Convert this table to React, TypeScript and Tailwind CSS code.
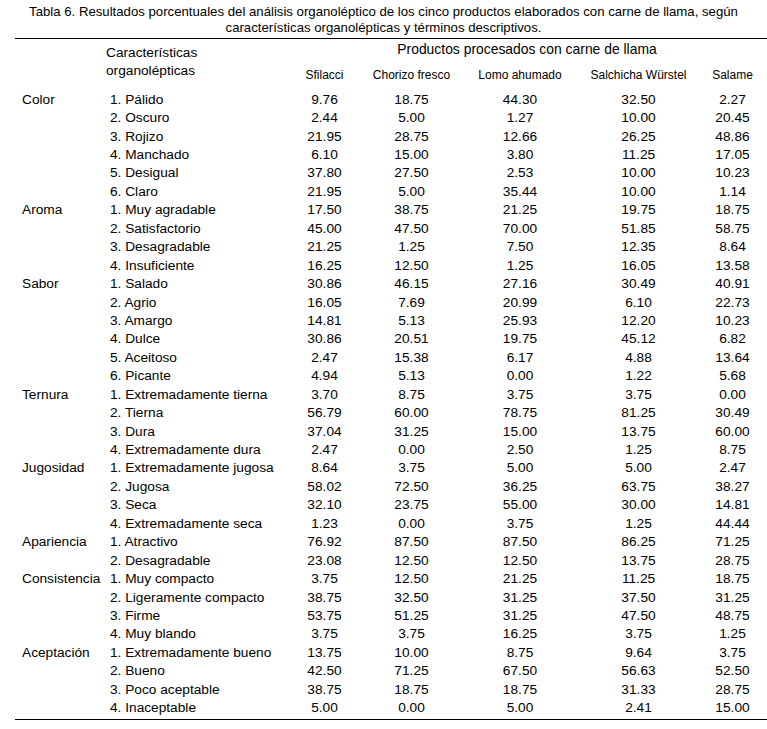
import React from 'react';

type Group = { name: string; rows: [string, string, string, string, string, string][] };

const groups: Group[] = [
  {
    name: 'Color',
    rows: [
      ['1. Pálido', '9.76', '18.75', '44.30', '32.50', '2.27'],
      ['2. Oscuro', '2.44', '5.00', '1.27', '10.00', '20.45'],
      ['3. Rojizo', '21.95', '28.75', '12.66', '26.25', '48.86'],
      ['4. Manchado', '6.10', '15.00', '3.80', '11.25', '17.05'],
      ['5. Desigual', '37.80', '27.50', '2.53', '10.00', '10.23'],
      ['6. Claro', '21.95', '5.00', '35.44', '10.00', '1.14'],
    ],
  },
  {
    name: 'Aroma',
    rows: [
      ['1. Muy agradable', '17.50', '38.75', '21.25', '19.75', '18.75'],
      ['2. Satisfactorio', '45.00', '47.50', '70.00', '51.85', '58.75'],
      ['3. Desagradable', '21.25', '1.25', '7.50', '12.35', '8.64'],
      ['4. Insuficiente', '16.25', '12.50', '1.25', '16.05', '13.58'],
    ],
  },
  {
    name: 'Sabor',
    rows: [
      ['1. Salado', '30.86', '46.15', '27.16', '30.49', '40.91'],
      ['2. Agrio', '16.05', '7.69', '20.99', '6.10', '22.73'],
      ['3. Amargo', '14.81', '5.13', '25.93', '12.20', '10.23'],
      ['4. Dulce', '30.86', '20.51', '19.75', '45.12', '6.82'],
      ['5. Aceitoso', '2.47', '15.38', '6.17', '4.88', '13.64'],
      ['6. Picante', '4.94', '5.13', '0.00', '1.22', '5.68'],
    ],
  },
  {
    name: 'Ternura',
    rows: [
      ['1. Extremadamente tierna', '3.70', '8.75', '3.75', '3.75', '0.00'],
      ['2. Tierna', '56.79', '60.00', '78.75', '81.25', '30.49'],
      ['3. Dura', '37.04', '31.25', '15.00', '13.75', '60.00'],
      ['4. Extremadamente dura', '2.47', '0.00', '2.50', '1.25', '8.75'],
    ],
  },
  {
    name: 'Jugosidad',
    rows: [
      ['1. Extremadamente jugosa', '8.64', '3.75', '5.00', '5.00', '2.47'],
      ['2. Jugosa', '58.02', '72.50', '36.25', '63.75', '38.27'],
      ['3. Seca', '32.10', '23.75', '55.00', '30.00', '14.81'],
      ['4. Extremadamente seca', '1.23', '0.00', '3.75', '1.25', '44.44'],
    ],
  },
  {
    name: 'Apariencia',
    rows: [
      ['1. Atractivo', '76.92', '87.50', '87.50', '86.25', '71.25'],
      ['2. Desagradable', '23.08', '12.50', '12.50', '13.75', '28.75'],
    ],
  },
  {
    name: 'Consistencia',
    rows: [
      ['1. Muy compacto', '3.75', '12.50', '21.25', '11.25', '18.75'],
      ['2. Ligeramente compacto', '38.75', '32.50', '31.25', '37.50', '31.25'],
      ['3. Firme', '53.75', '51.25', '31.25', '47.50', '48.75'],
      ['4. Muy blando', '3.75', '3.75', '16.25', '3.75', '1.25'],
    ],
  },
  {
    name: 'Aceptación',
    rows: [
      ['1. Extremadamente bueno', '13.75', '10.00', '8.75', '9.64', '3.75'],
      ['2. Bueno', '42.50', '71.25', '67.50', '56.63', '52.50'],
      ['3. Poco aceptable', '38.75', '18.75', '18.75', '31.33', '28.75'],
      ['4. Inaceptable', '5.00', '0.00', '5.00', '2.41', '15.00'],
    ],
  },
];

const products = ['Sfilacci', 'Chorizo fresco', 'Lomo ahumado', 'Salchicha Würstel', 'Salame'];

export default function App() {
  return (
    <div className="w-[767px] min-h-[729px] bg-white text-black font-['Liberation_Sans',Arial,sans-serif]">
      <p className="pt-[4px] text-center text-[13.2px] leading-[16px] whitespace-nowrap">
        Tabla 6. Resultados porcentuales del análisis organoléptico de los cinco productos elaborados con carne de llama, según
        <br />
        características organolépticas y términos descriptivos.
      </p>

      {/* table: rule at y=38, rows 18.45px apart */}
      <table className="ml-[15px] mt-[2px] w-[752px] table-fixed border-collapse text-[13.7px] border-t border-b border-black">
        <colgroup>
          <col className="w-[91px]" />
          <col className="w-[181px]" />
          <col className="w-[75px]" />
          <col className="w-[99px]" />
          <col className="w-[118px]" />
          <col className="w-[119px]" />
          <col className="w-[69px]" />
        </colgroup>
        <thead>
          <tr className="h-[20px]">
            <th rowSpan={2} />
            <th rowSpan={2} className="align-top pt-[5px] text-left font-normal leading-[18px]">
              Características
              <br />
              organolépticas
            </th>
            <th colSpan={5} className="font-normal text-center text-[13.9px] leading-[18px]">
              Productos procesados con carne de llama
            </th>
          </tr>
          <tr className="h-[32px]">
            {products.map((p) => (
              <th key={p} className="font-normal text-center text-[12px] leading-[18px] pt-[1px]">
                {p}
              </th>
            ))}
          </tr>
        </thead>
        <tbody>
          {groups.map((g, gi) =>
            g.rows.map((r, i) => {
              const last = gi === groups.length - 1 && i === g.rows.length - 1;
              return (
                <tr key={g.name + i} className={last ? 'h-[21px] leading-[18px] align-top' : 'h-[18.45px] leading-[18px]'}>
                  <td className="pl-[7px] p-0">{i === 0 ? g.name : ''}</td>
                  <td className="pl-[4px] p-0 whitespace-nowrap">{r[0]}</td>
                  {r.slice(1).map((v, j) => (
                    <td key={j} className="p-0 text-center">
                      {v}
                    </td>
                  ))}
                </tr>
              );
            })
          )}
        </tbody>
      </table>
    </div>
  );
}
